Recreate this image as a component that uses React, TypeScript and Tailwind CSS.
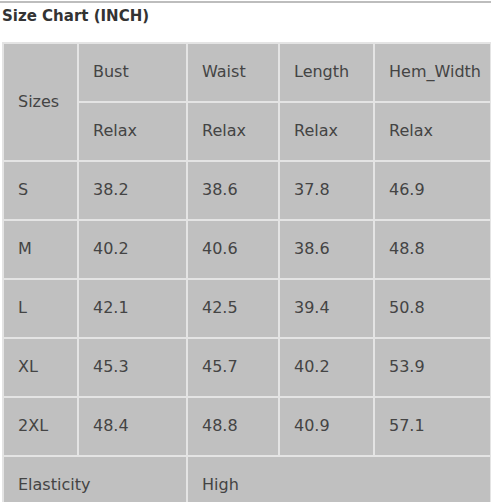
const rows = [
  ["S", "38.2", "38.6", "37.8", "46.9"],
  ["M", "40.2", "40.6", "38.6", "48.8"],
  ["L", "42.1", "42.5", "39.4", "50.8"],
  ["XL", "45.3", "45.7", "40.2", "53.9"],
  ["2XL", "48.4", "48.8", "40.9", "57.1"],
];

const cell = "border-2 border-[#e4e4e4] h-[59px] pl-[14px] align-middle font-normal text-left";

export default function App() {
  return (
    <div className="min-h-screen bg-white text-[#444] font-['DejaVu_Sans',sans-serif]">
      <div className="border-t-2 border-[#bdbdbd] mt-px" />
      <h2 className="text-[15px] font-bold text-[#333] pl-[2px] pt-[2px]">Size Chart (INCH)</h2>
      <table className="table-fixed border-collapse bg-[#c0c0c0] text-[16px] ml-[2px] mt-[14px] w-[488px]">
        <colgroup>
          <col className="w-[75px]" />
          <col className="w-[109px]" />
          <col className="w-[92px]" />
          <col className="w-[95px]" />
          <col className="w-[117px]" />
        </colgroup>
        <tbody>
          <tr>
            <th rowSpan={2} className={cell}>Sizes</th>
            <th className={cell}>Bust</th>
            <th className={cell}>Waist</th>
            <th className={cell}>Length</th>
            <th className={cell}>Hem_Width</th>
          </tr>
          <tr>
            <td className={cell}>Relax</td>
            <td className={cell}>Relax</td>
            <td className={cell}>Relax</td>
            <td className={cell}>Relax</td>
          </tr>
          {rows.map((r) => (
            <tr key={r[0]}>
              {r.map((v, i) => (
                <td key={i} className={cell}>{v}</td>
              ))}
            </tr>
          ))}
          <tr>
            <td colSpan={2} className={cell}>Elasticity</td>
            <td colSpan={3} className={cell}>High</td>
          </tr>
        </tbody>
      </table>
    </div>
  );
}
